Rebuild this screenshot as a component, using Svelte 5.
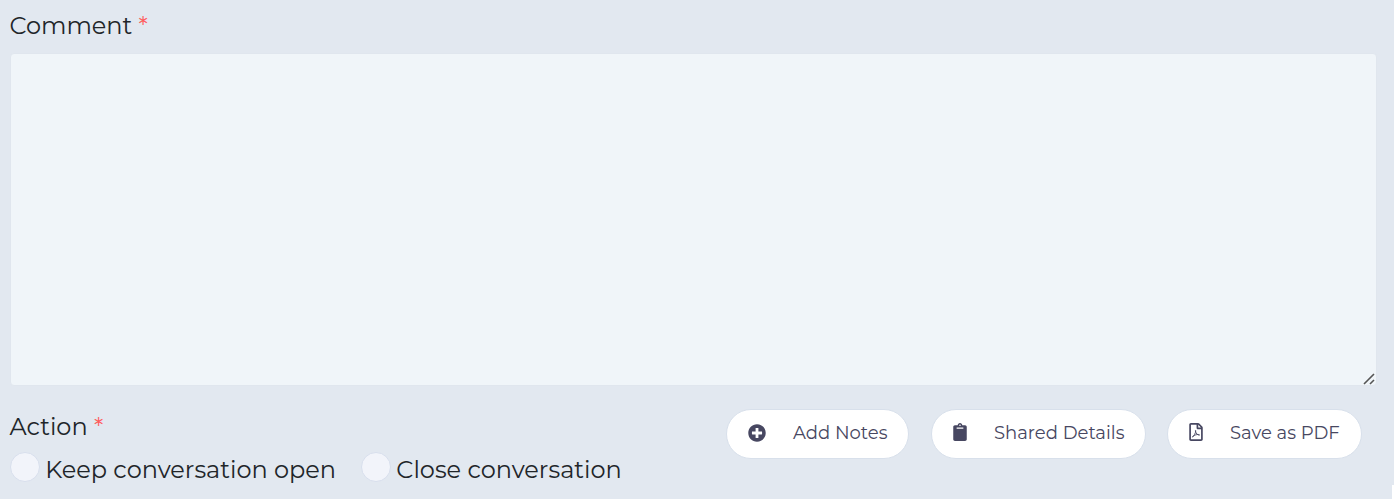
<script>
  let comment = '';
  let action = '';

  const actions = [
    { value: 'open', label: 'Keep conversation open' },
    { value: 'close', label: 'Close conversation' }
  ];

  const addNotes = () => {
    action = 'open';
  };

  const saveAsPdf = () => {
    window.print();
  };
</script>

<div class="page">
  <label class="title comment" for="comment">Comment <span class="required">*</span></label>

  <div class="comment-box">
    <textarea id="comment" bind:value={comment}></textarea>
    <svg class="grip" viewBox="0 0 12 12">
      <path d="M1 11L11 1M7 11L11 7" />
    </svg>
  </div>

  <div class="footer">
    <div class="action-group">
      <div class="title">Action <span class="required">*</span></div>
      <div class="options">
        {#each actions as item}
          <label class="option">
            <input type="radio" bind:group={action} value={item.value} />
            <span>{item.label}</span>
          </label>
        {/each}
      </div>
    </div>

    <div class="buttons">
      <button class="notes" on:click={addNotes}>
        <svg viewBox="0 0 512 512">
          <path d="M256 8C119 8 8 119 8 256s111 248 248 248 248-111 248-248S393 8 256 8zm144 276c0 6.600-5.400 12-12 12h-92v92c0 6.600-5.400 12-12 12h-56c-6.600 0-12-5.400-12-12v-92h-92c-6.600 0-12-5.400-12-12v-56c0-6.600 5.400-12 12-12h92v-92c0-6.600 5.400-12 12-12h56c6.600 0 12 5.400 12 12v92h92c6.600 0 12 5.400 12 12v56z" />
        </svg>
        <span>Add Notes</span>
      </button>
      <button class="shared">
        <svg viewBox="0 0 384 512">
          <path d="M384 112v352c0 26.510-21.490 48-48 48H48c-26.510 0-48-21.490-48-48V112c0-26.510 21.490-48 48-48h80c0-35.290 28.710-64 64-64s64 28.710 64 64h80c26.510 0 48 21.490 48 48zM192 40c-13.255 0-24 10.745-24 24s10.745 24 24 24 24-10.745 24-24-10.745-24-24-24m96 114v-20a6 6 0 0 0-6-6H102a6 6 0 0 0-6 6v20a6 6 0 0 0 6 6h180a6 6 0 0 0 6-6z" />
        </svg>
        <span>Shared Details</span>
      </button>
      <button class="pdf" on:click={saveAsPdf}>
        <svg viewBox="0 0 384 512">
          <path d="M369.900 97.900L286 14C277 5 264.800 0 252.100 0H48C21.500 0 0 21.500 0 48v416c0 26.500 21.500 48 48 48h288c26.500 0 48-21.500 48-48V131.900c0-12.700-5.100-25-14.100-34zM332.100 128H256V51.900l76.100 76.100zM48 464V48h160v104c0 13.300 10.700 24 24 24h104v288H48z" />
          <path class="mark" d="M88 400C130 385 184 285 184 220C184 200 170 205 178 235C194 300 235 345 290 345C310 338 265 320 215 330C165 340 115 360 88 400" />
        </svg>
        <span>Save as PDF</span>
      </button>
    </div>
  </div>
  <div class="corner"></div>
</div>

<style>
  :global(body) {
    overflow: hidden;
  }

  .page {
    position: relative;
    box-sizing: border-box;
    height: 499px;
    padding: 8px 17px 0 10px;
    background: #e2e8f0;
    color: #212529;
    font-family: Montserrat, Inter, sans-serif;
    font-size: 24px;
    font-weight: 400;
  }

  .title {
    display: block;
    height: 36px;
    margin-left: -0.6px;
    line-height: 36px;
    white-space: nowrap;
  }

  .required {
    color: #ff5c5c;
  }

  .comment {
    height: 45px;
  }

  .comment-box {
    position: relative;
    height: 333px;
  }

  textarea {
    display: block;
    box-sizing: border-box;
    width: 100%;
    height: 100%;
    padding: 12px;
    border: 1px solid #e0e6ee;
    border-radius: 4px;
    outline: none;
    background: #f0f5f9;
    color: inherit;
    font: inherit;
    resize: none;
  }

  .grip {
    position: absolute;
    right: 2px;
    bottom: 1px;
    width: 12px;
    height: 12px;
    fill: none;
    stroke: #555;
    stroke-width: 1.6;
  }

  .footer {
    display: flex;
    justify-content: space-between;
    padding-right: 15px;
  }

  .action-group {
    padding-top: 23px;
  }

  .options {
    display: flex;
    gap: 25px;
    padding-top: 7px;
  }

  .option {
    display: flex;
    gap: 5.3px;
    height: 30px;
    line-height: 36px;
    white-space: nowrap;
  }

  input {
    appearance: none;
    box-sizing: border-box;
    width: 30px;
    height: 30px;
    margin: 0;
    border: 1px solid #d8dfed;
    border-radius: 50%;
    background: #f2f4fa;
  }

  input:checked {
    border: 8px solid #474761;
  }

  .buttons {
    display: flex;
    gap: 22px;
    padding-top: 23px;
  }

  button {
    display: flex;
    box-sizing: border-box;
    width: 183px;
    height: 50px;
    padding: 0 0 3px 20.5px;
    align-items: center;
    border: 1px solid #d8e0eb;
    border-radius: 25px;
    background: #fff;
    color: #474761;
    font: 400 18px Montserrat, Inter, sans-serif;
    white-space: nowrap;
    cursor: pointer;
  }

  button svg {
    width: 18px;
    height: 18px;
    margin-right: 27.5px;
    fill: currentColor;
  }

  button.shared {
    width: 215px;
  }

  button.pdf {
    width: 195px;
    margin-left: -1px;
  }

  .shared svg,
  .pdf svg {
    width: 14px;
    margin-top: -1px;
  }

  button.pdf {
    padding-left: 21px;
  }

  .pdf svg {
    margin-right: 27px;
  }

  .mark {
    fill: none;
    stroke: currentColor;
    stroke-width: 26;
  }

  .corner {
    position: absolute;
    right: 0;
    bottom: 0;
    width: 2px;
    height: 14px;
    background: #fff;
  }
</style>
